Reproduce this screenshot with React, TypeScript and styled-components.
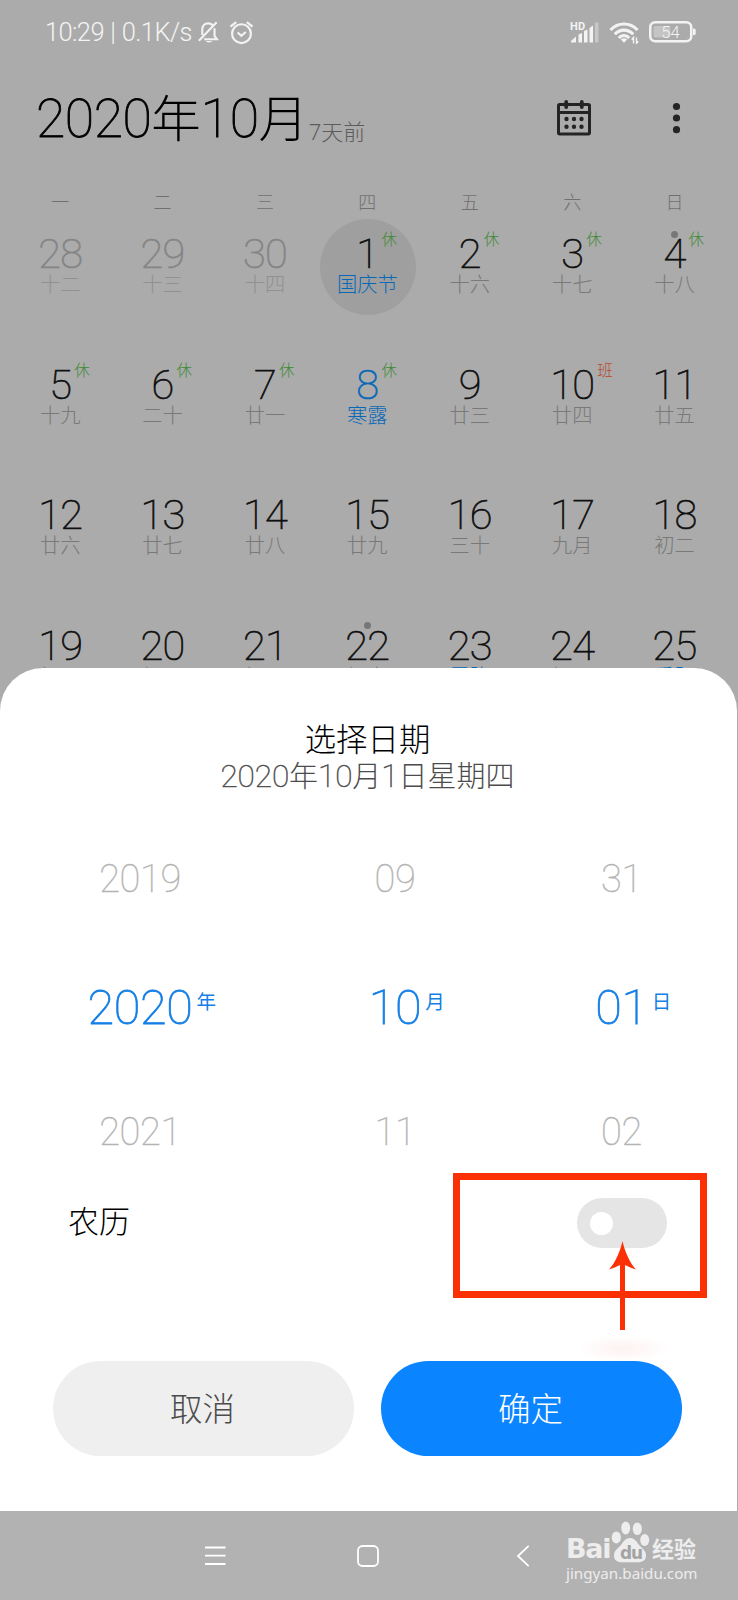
import React from "react";
import styled, { createGlobalStyle } from "styled-components";

const Global = createGlobalStyle`
  * { box-sizing: border-box; }
  html, body { margin: 0; padding: 0; }
  body {
    background: #ababab;
    font-family: Roboto, "Noto Sans CJK SC", sans-serif;
    font-weight: 300;
  }
  svg { display: block; }
  button { font: inherit; border: 0; padding: 0; }
`;

const Screen = styled.div`
  position: relative;
  width: 738px;
  height: 1600px;
  display: flex;
  flex-direction: column;
  overflow: hidden;
  background: #ababab;
`;

const AppArea = styled.main`
  position: relative;
  height: 1511px;
  overflow: hidden;
`;

/* Status bar */

const StatusBar = styled.div`
  height: 70px;
  padding: 0 42px 0 45px;
  display: flex;
  justify-content: space-between;
  align-items: flex-start;
  color: #f3f3f3;
`;

const StatusGroup = styled.div<{ $gap: number }>`
  display: flex;
  align-items: center;
  gap: ${(p) => p.$gap}px;
  height: 64px;
`;

const StatusText = styled.span`
  font-size: 25.5px;
  line-height: 30px;
  letter-spacing: -0.6px;
  word-spacing: 0.8px;
  white-space: pre;
`;

/* Header */

const Header = styled.header`
  height: 96px;
  padding: 3px 53px 0 36px;
  display: flex;
  align-items: center;
  justify-content: space-between;
`;

const TitleRow = styled.div`
  display: flex;
  align-items: flex-start;
`;

const Title = styled.h1`
  margin: 0;
  font-size: 53.5px;
  font-weight: 100;
  line-height: 60px;
  letter-spacing: -0.45px;
  color: #000;
  -webkit-text-stroke: 0.9px currentColor;
`;

const Han = styled.span<{ $size: number }>`
  font-size: ${(p) => p.$size}px;
  letter-spacing: 0;
  font-weight: 300;
  -webkit-text-stroke: 0;
`;

const TitleNote = styled.span`
  margin: 32px 0 0 1px;
  font-size: 22px;
  line-height: 24px;
  color: #5c5c5c;
`;

const HeaderActions = styled.div`
  display: flex;
  align-items: center;
  gap: 77px;
  margin-top: -3px;
`;

/* Calendar */

const Weekdays = styled.div`
  display: grid;
  grid-template-columns: repeat(7, 102.4px);
  padding: 0 9px;
  margin-top: 27px;
  height: 40px;
  font-size: 18px;
  line-height: 20px;
  text-align: center;
  color: #707070;
`;

const MonthGrid = styled.div`
  display: grid;
  grid-template-columns: repeat(7, 102.4px);
  grid-auto-rows: 130.5px;
  padding: 0 9px;
`;

const DayCell = styled.div`
  position: relative;
  display: flex;
  flex-direction: column;
  align-items: center;
`;

const SelectedDisc = styled.div`
  position: absolute;
  left: 4px;
  top: -14px;
  width: 96px;
  height: 96px;
  border-radius: 50%;
  background: #9f9f9f;
`;

const EventDot = styled.i`
  position: absolute;
  left: 47.5px;
  top: -2.5px;
  width: 7px;
  height: 7px;
  border-radius: 50%;
  background: #777;
`;

const DayNumber = styled.span<{ $tone: string }>`
  position: relative;
  font-size: 41.5px;
  font-weight: 100;
  line-height: 42px;
  letter-spacing: -0.7px;
  color: ${(p) => p.$tone};
  -webkit-text-stroke: 0.7px currentColor;
`;

const Badge = styled.span<{ $work?: boolean }>`
  position: absolute;
  left: calc(100% + 3px);
  top: -2px;
  font-size: 15.5px;
  font-weight: 300;
  line-height: 18px;
  letter-spacing: 0;
  color: ${(p) => (p.$work ? "#b8492a" : "#3f8a35")};
  -webkit-text-stroke: 0;
`;

const LunarText = styled.span<{ $tone: string }>`
  margin-top: 0.4px;
  font-size: 20.3px;
  line-height: 20px;
  white-space: nowrap;
  color: ${(p) => p.$tone};
  z-index: 0;
`;

/* Date sheet */

const Sheet = styled.section`
  position: absolute;
  left: 0;
  bottom: 0;
  width: 737px;
  height: 843px;
  padding-top: 52px;
  display: flex;
  flex-direction: column;
  border-radius: 43px 43px 0 0;
  background: #fff;
`;

const SheetTitle = styled.h2`
  margin: 0;
  padding-right: 2px;
  font-size: 31.4px;
  font-weight: 300;
  line-height: 42px;
  text-align: center;
  color: #000;
`;

const SheetSubtitle = styled.p`
  margin: 0;
  padding-right: 2px;
  font-size: 31.6px;
  font-weight: 100;
  line-height: 30px;
  letter-spacing: -0.15px;
  text-align: center;
  color: #4c4c4c;
  -webkit-text-stroke: 0.5px currentColor;
`;

const Wheels = styled.div`
  display: grid;
  grid-template-columns: 280px 230px 223px;
  margin-top: 22px;
  height: 380px;
`;

const Wheel = styled.div`
  display: grid;
  grid-template-rows: 130px 128px 120px;
  justify-items: center;
  align-items: center;
`;

const WheelItem = styled.span<{ $active?: boolean }>`
  position: relative;
  font-size: ${(p) => (p.$active ? 48.6 : 38)}px;
  font-weight: 100;
  line-height: 56px;
  letter-spacing: -0.4px;
  color: ${(p) => (p.$active ? "#147fe6" : "#b4b4b4")};
  -webkit-text-stroke: ${(p) => (p.$active ? 0.8 : 0.4)}px currentColor;
`;

const WheelUnit = styled.span`
  position: absolute;
  left: calc(100% + 4px);
  top: 13px;
  font-size: 19.5px;
  font-weight: 400;
  line-height: 20px;
  letter-spacing: 0;
  -webkit-text-stroke: 0;
`;

const LunarRow = styled.div`
  display: flex;
  align-items: center;
  justify-content: space-between;
  height: 58px;
  padding: 0 70px 0 68px;
`;

const LunarLabel = styled.span`
  font-size: 31px;
  line-height: 40px;
  color: #000;
`;

const Toggle = styled.div`
  width: 90px;
  height: 50px;
  padding-left: 13px;
  display: flex;
  align-items: center;
  border-radius: 25px;
  background: #e5e5e5;
`;

const Knob = styled.div`
  width: 23px;
  height: 23px;
  border-radius: 50%;
  background: #fff;
`;

const Buttons = styled.div`
  display: flex;
  gap: 27px;
  margin-top: 109px;
  padding-left: 53px;
`;

const SheetButton = styled.button<{ $primary?: boolean }>`
  width: 301px;
  height: 95px;
  padding: 0 2px 5px 0;
  border-radius: 48px;
  font-size: 32.5px;
  color: ${(p) => (p.$primary ? "#fff" : "#4c4c4c")};
  background: ${(p) => (p.$primary ? "#0a84ff" : "#efefef")};
`;

/* Annotation laid over the sheet */

const Highlight = styled.div`
  position: absolute;
  left: 453px;
  top: 1173px;
  width: 254px;
  height: 125px;
  border: 7px solid #fb3004;
`;

const Pointer = styled.svg`
  position: absolute;
  left: 609px;
  top: 1241px;
`;

const Glow = styled.div`
  position: absolute;
  left: 577px;
  top: 1335px;
  width: 92px;
  height: 27px;
  background: radial-gradient(closest-side, rgba(250, 60, 60, 0.07), rgba(250, 60, 60, 0));
`;

/* Navigation bar */

const NavBar = styled.nav`
  position: relative;
  height: 89px;
  display: grid;
  grid-template-columns: 291px 153px 157px;
  align-items: center;
  background: #b2b2b2;
`;

const NavSlot = styled.div<{ $pad: number }>`
  padding-left: ${(p) => p.$pad}px;
`;

const Watermark = styled.div`
  position: absolute;
  left: 566px;
  top: 8px;
  color: #ededed;
`;

const BrandRow = styled.div`
  display: flex;
  align-items: flex-end;
  height: 45px;
`;

const BrandLatin = styled.span`
  width: 44px;
  font: 700 27px/31px "DejaVu Sans", sans-serif;
  letter-spacing: -1.3px;
`;

const Paw = styled.div`
  position: relative;
  width: 42px;
  height: 45px;
`;

const PawLabel = styled.span`
  position: absolute;
  left: 10px;
  top: 24px;
  font: 700 17px/20px "DejaVu Sans", sans-serif;
  letter-spacing: -1.2px;
  color: #a3a3a3;
`;

const BrandHan = styled.span`
  font-size: 22px;
  font-weight: 700;
  line-height: 29px;
`;

const BrandUrl = styled.div`
  margin: -1px 0 0;
  font: 400 15.2px/20px "Noto Sans", sans-serif;
`;

const BLACK = "#101010";
const BLUE = "#0768b8";
const FADED = "#858585";
const LUNAR = "#797979";

type Day = {
  n: number;
  lunar: string;
  badge?: string;
  faded?: boolean;
  selected?: boolean;
  dot?: boolean;
  blueNumber?: boolean;
  blueLunar?: boolean;
};

const days: Day[] = [
  { n: 28, lunar: "十二", faded: true },
  { n: 29, lunar: "十三", faded: true },
  { n: 30, lunar: "十四", faded: true },
  { n: 1, lunar: "国庆节", badge: "休", selected: true, blueLunar: true },
  { n: 2, lunar: "十六", badge: "休" },
  { n: 3, lunar: "十七", badge: "休" },
  { n: 4, lunar: "十八", badge: "休", dot: true },
  { n: 5, lunar: "十九", badge: "休" },
  { n: 6, lunar: "二十", badge: "休" },
  { n: 7, lunar: "廿一", badge: "休" },
  { n: 8, lunar: "寒露", badge: "休", blueNumber: true, blueLunar: true },
  { n: 9, lunar: "廿三" },
  { n: 10, lunar: "廿四", badge: "班" },
  { n: 11, lunar: "廿五" },
  { n: 12, lunar: "廿六" },
  { n: 13, lunar: "廿七" },
  { n: 14, lunar: "廿八" },
  { n: 15, lunar: "廿九" },
  { n: 16, lunar: "三十" },
  { n: 17, lunar: "九月" },
  { n: 18, lunar: "初二" },
  { n: 19, lunar: "初三" },
  { n: 20, lunar: "初四" },
  { n: 21, lunar: "初五" },
  { n: 22, lunar: "初六", dot: true },
  { n: 23, lunar: "霜降", blueLunar: true },
  { n: 24, lunar: "初八" },
  { n: 25, lunar: "重阳", blueLunar: true },
];

const wheels = [
  { before: "2019", value: "2020", unit: "年", after: "2021" },
  { before: "09", value: "10", unit: "月", after: "11" },
  { before: "31", value: "01", unit: "日", after: "02" },
];

const MutedBell = () => (
  <svg width="23" height="24" viewBox="0 0 24 24" fill="none" stroke="#f3f3f3" strokeWidth="2.200">
    <path d="M5.500 15V9.500C5.500 5.500 8 3 11.700 3c2.200 0 4 .8 5.200 2.400M18.300 8v8l2.500 3.500H7.500" />
    <path d="M2 21.200 20.500 1.800" />
    <path d="M9 21.500h7c-1 1.900-6 1.900-7 0z" fill="#f3f3f3" stroke="none" />
  </svg>
);

const AlarmClock = () => (
  <svg width="25" height="25" viewBox="0 0 26 25" fill="none" stroke="#f3f3f3" strokeWidth="2.300">
    <circle cx="13" cy="13.700" r="9.800" />
    <path d="M9 12.500l3.800 3.500 4.700-4M1.500 6.500 7.500 1.600M24.500 6.500 18.500 1.600" />
  </svg>
);

const Signal = () => (
  <svg width="29" height="23" viewBox="0 0 29 23" fill="#f3f3f3">
    <text x="0" y="8.500" fontSize="11" fontWeight="700" fontFamily="Roboto" letterSpacing="0.3">HD</text>
    <path d="M1 21.500V20l5-4.500v6zM8.500 21.500V13.500L12 12v9.500zM14 21.500V10l3.500-1.500v13zM19.500 21.500V7L23 4.500v17z" />
    <rect x="25" y="1.500" width="3.500" height="20" opacity="0.4" />
  </svg>
);

const Wifi = () => (
  <svg width="30" height="23" viewBox="0 0 30 23" fill="none" stroke="#f3f3f3" strokeWidth="3.100">
    <path d="M1.500 9c7.500-8 19.500-8 27 0M5.800 13.300c5-5.600 13.400-5.600 18.400 0" />
    <path d="M9.800 17c3-3.400 7.400-3.400 10.400 0" />
    <path d="M11.800 18.500c2-1.700 4.400-1.700 6.400 0L15 21.700z" fill="#f3f3f3" stroke="none" />
    <path d="M24.500 22.500v-6l-1.800 2.300M27.500 16.500v6l1.700-2.300" strokeWidth="1.400" />
  </svg>
);

const Battery = () => (
  <svg width="47" height="22" viewBox="0 0 47 22">
    <rect x="1.250" y="1.250" width="41" height="19" rx="5" fill="none" stroke="#f3f3f3" strokeWidth="2.500" />
    <rect x="4.500" y="5" width="17" height="11.500" rx="2" fill="#c4c4c4" />
    <path d="M44 7.500h1.200q1.500 0 1.500 1.500v3.500q0 1.500-1.500 1.500H44z" fill="#f3f3f3" />
    <text x="21.500" y="16.500" textAnchor="middle" fontSize="16.500" fontWeight="300" fontFamily="Roboto" fill="#f3f3f3">54</text>
  </svg>
);

const CalendarIcon = () => (
  <svg width="34" height="36" viewBox="0 0 34 36" fill="none" stroke="#242424" strokeWidth="3">
    <rect x="1.500" y="4.500" width="31" height="29.500" rx="1.200" />
    <path d="M2 12.500h30" />
    <path d="M9.200 2v5M24.800 2v5" strokeWidth="3.800" strokeLinecap="round" />
    <g fill="#242424" stroke="none">
      {[9.5, 17, 24.5].map((x) => (
        <React.Fragment key={x}>
          <circle cx={x} cy="19" r="2.200" />
          <circle cx={x} cy="26.700" r="2.200" />
        </React.Fragment>
      ))}
    </g>
  </svg>
);

const MoreIcon = () => (
  <svg width="17" height="36" viewBox="0 0 17 36" fill="#242424">
    <circle cx="8.500" cy="6.500" r="3.600" />
    <circle cx="8.500" cy="18" r="3.600" />
    <circle cx="8.500" cy="29.700" r="3.600" />
  </svg>
);

const PawShape = () => (
  <svg width="42" height="45" viewBox="0 0 42 45" fill="#ededed">
    <ellipse cx="6.300" cy="18.500" rx="4.600" ry="6" />
    <ellipse cx="15.700" cy="9" rx="4.500" ry="6.500" />
    <ellipse cx="27.300" cy="9.800" rx="4.600" ry="6.300" />
    <ellipse cx="34.700" cy="21" rx="4.500" ry="6" />
    <path d="M20 19c5 0 6.500 4 9.500 7.500 3.500 3.500 6.500 5.500 6.500 10 0 4.500-3 6.800-8 6.800H12c-5 0-8-2.300-8-6.800 0-4.500 3-6.500 6.500-10C13.500 23 15 19 20 19z" />
  </svg>
);

const DayView = ({ day }: { day: Day }) => (
  <DayCell>
    {day.selected && <SelectedDisc />}
    {day.dot && <EventDot />}
    <DayNumber $tone={day.faded ? FADED : day.blueNumber ? BLUE : BLACK}>
      {day.n}
      {day.badge && <Badge $work={day.badge === "班"}>{day.badge}</Badge>}
    </DayNumber>
    <LunarText $tone={day.blueLunar ? BLUE : day.faded ? "#909090" : LUNAR}>{day.lunar}</LunarText>
  </DayCell>
);

export default function App() {
  return (
    <>
      <Global />
      <Screen>
        <AppArea>
          <StatusBar>
            <StatusGroup $gap={5}>
              <StatusText>10:29 | 0.1K/s</StatusText>
              <StatusGroup $gap={9}>
                <MutedBell />
                <AlarmClock />
              </StatusGroup>
            </StatusGroup>
            <StatusGroup $gap={10}>
              <Signal />
              <Wifi />
              <Battery />
            </StatusGroup>
          </StatusBar>
          <Header>
            <TitleRow>
              <Title>
                2020<Han $size={49.5}>年</Han>10<Han $size={49.5}>月</Han>
              </Title>
              <TitleNote>7天前</TitleNote>
            </TitleRow>
            <HeaderActions>
              <CalendarIcon />
              <MoreIcon />
            </HeaderActions>
          </Header>
          <Weekdays>
            {["一", "二", "三", "四", "五", "六", "日"].map((d) => (
              <span key={d}>{d}</span>
            ))}
          </Weekdays>
          <MonthGrid>
            {days.map((day) => (
              <DayView key={day.n} day={day} />
            ))}
          </MonthGrid>
          <Sheet>
            <SheetTitle>选择日期</SheetTitle>
            <SheetSubtitle>
              2020<Han $size={29}>年</Han>10<Han $size={29}>月</Han>1<Han $size={29}>日星期四</Han>
            </SheetSubtitle>
            <Wheels>
              {wheels.map((w) => (
                <Wheel key={w.unit}>
                  <WheelItem>{w.before}</WheelItem>
                  <WheelItem $active>
                    {w.value}
                    <WheelUnit>{w.unit}</WheelUnit>
                  </WheelItem>
                  <WheelItem>{w.after}</WheelItem>
                </Wheel>
              ))}
            </Wheels>
            <LunarRow>
              <LunarLabel>农历</LunarLabel>
              <Toggle>
                <Knob />
              </Toggle>
            </LunarRow>
            <Buttons>
              <SheetButton>取消</SheetButton>
              <SheetButton $primary>确定</SheetButton>
            </Buttons>
          </Sheet>
          <Highlight />
          <Pointer width="27" height="89" viewBox="0 0 27 89" fill="#fb3004">
            <path d="M13.500 0C15.500 9 20 21 27 28.500c-4-1.500-7.500-2.500-11-4.500v65h-5V24c-3.500 2-7 3-11 4.500C7 21 11.500 9 13.500 0z" />
          </Pointer>
          <Glow />
        </AppArea>
        <NavBar>
          <NavSlot $pad={205}>
            <svg width="21" height="20" viewBox="0 0 21 20" stroke="#fff" strokeWidth="1.800">
              <path d="M0 1.500h20.500M0 9.700h20.500M0 18h20.500" />
            </svg>
          </NavSlot>
          <NavSlot $pad={66}>
            <svg width="22" height="22" viewBox="0 0 22 22" fill="none" stroke="#fff" strokeWidth="1.800">
              <rect x="1" y="1" width="20" height="20" rx="4.500" />
            </svg>
          </NavSlot>
          <NavSlot $pad={72}>
            <svg width="14" height="22" viewBox="0 0 14 22" fill="none" stroke="#fff" strokeWidth="1.800">
              <path d="M12.700 .8 2 11l10.700 10.200" />
            </svg>
          </NavSlot>
          <Watermark>
            <BrandRow>
              <BrandLatin>Bai</BrandLatin>
              <Paw>
                <PawShape />
                <PawLabel>du</PawLabel>
              </Paw>
              <BrandHan>经验</BrandHan>
            </BrandRow>
            <BrandUrl>jingyan.baidu.com</BrandUrl>
          </Watermark>
        </NavBar>
      </Screen>
    </>
  );
}
